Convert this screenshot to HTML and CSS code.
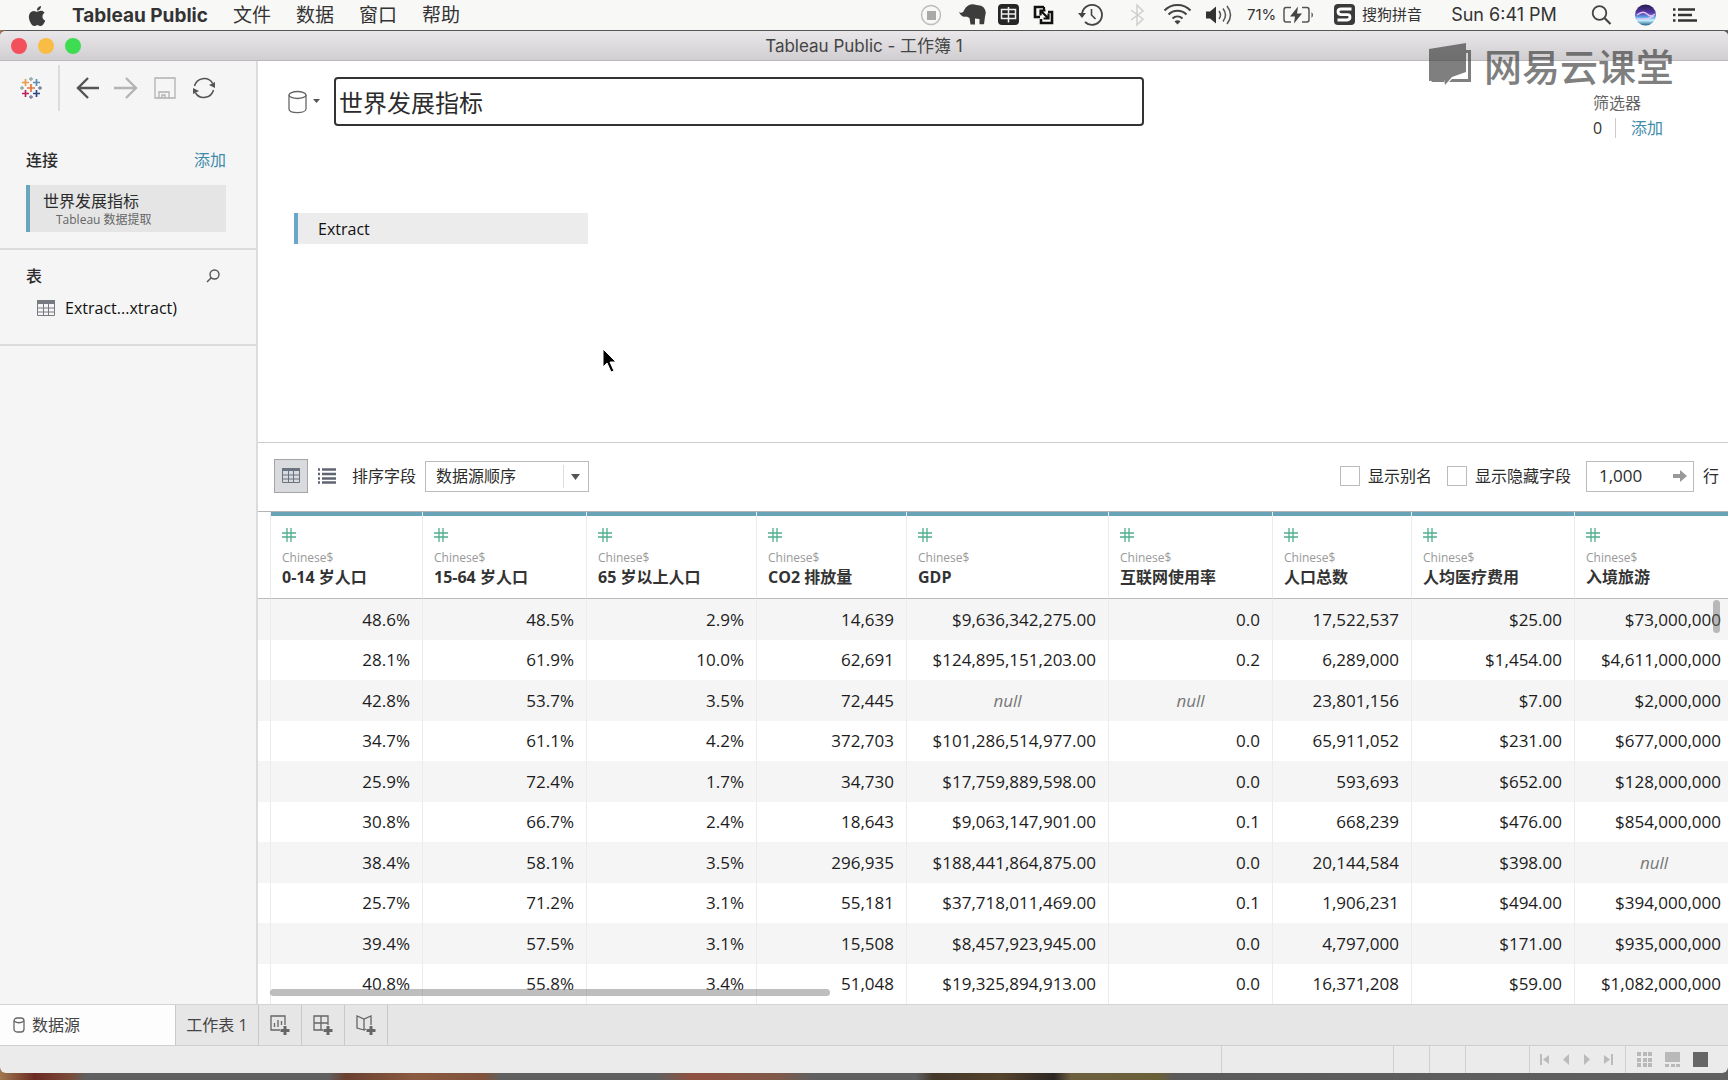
FILE: index.html
```html
<!DOCTYPE html>
<html lang="zh-CN">
<head>
<meta charset="utf-8">
<title>Tableau Public - 工作簿 1</title>
<link rel="stylesheet" href="styles.css">
</head>
<body>
<svg class="defs" width="0" height="0" aria-hidden="true">
  <defs>
    <symbol id="hash" viewBox="0 0 14 14"><path d="M5 0v14M9 0v14M0 5h14M0 9h14" stroke="#4fae8c" stroke-width="1.3" fill="none"/></symbol>
    <linearGradient id="siri" x1="0" y1="0" x2="0" y2="1"><stop offset="0" stop-color="#231a4d"/><stop offset=".4" stop-color="#5a3aa8"/><stop offset=".6" stop-color="#5aa5e8"/><stop offset=".75" stop-color="#c9f1ff"/><stop offset="1" stop-color="#1d5f86"/></linearGradient>
  </defs>
</svg>

<header class="menubar">
  <nav class="menus">
    <a href="#" class="apple" aria-label="Apple"><svg width="20" height="20" viewBox="0 0 24 24"><path fill="#3c3c3c" d="M12.152 6.896c-.948 0-2.415-1.078-3.96-1.04-2.04.027-3.91 1.183-4.961 3.014-2.117 3.675-.546 9.103 1.519 12.09 1.013 1.454 2.208 3.09 3.792 3.039 1.52-.065 2.09-.987 3.935-.987 1.831 0 2.35.987 3.96.948 1.637-.026 2.676-1.48 3.676-2.948 1.156-1.688 1.636-3.325 1.662-3.415-.039-.013-3.182-1.221-3.22-4.857-.026-3.04 2.48-4.494 2.597-4.559-1.429-2.09-3.623-2.324-4.39-2.376-2-.156-3.675 1.09-4.61 1.09zM15.53 3.83c.843-1.012 1.4-2.427 1.245-3.83-1.207.052-2.662.805-3.532 1.818-.78.896-1.454 2.338-1.273 3.714 1.338.104 2.715-.688 3.559-1.701"/></svg></a>
    <a href="#" class="app-name">Tableau Public</a>
    <a href="#">文件</a>
    <a href="#">数据</a>
    <a href="#">窗口</a>
    <a href="#">帮助</a>
  </nav>
  <div class="tray">
    <svg width="32" height="30"><circle cx="15" cy="15" r="9.500" fill="none" stroke="#bdbdbd" stroke-width="1.500"/><rect x="11" y="11" width="9" height="9" fill="#a9a9a9"/></svg>
    <svg width="44" height="30"><path fill="#3d3d3d" d="M11 11.500c1 1.800 3 1.700 4.500 0C17 8.500 19 5 23 4.500c3-.8 5 .8 7 .8 4.500 0 7.500 3 7.800 7.500l-.8 4-1 7.500h-4.500V19l-4.500-.5V24.500h-4.500l-1-6.500-3-1.500c-3.500 1-6.500-1-7.500-5z"/></svg>
    <svg width="34" height="30"><rect x="6" y="4" width="21" height="21" rx="4" fill="#262626"/><path d="M9.500 9.500h14v9h-14zM16.500 7v15.500M9.500 14h14" fill="none" stroke="#eee" stroke-width="1.500"/></svg>
    <svg width="36" height="30"><path d="M18 7H9v10h5M22 12h4v11H15v-4" fill="none" stroke="#111" stroke-width="2.600"/><path d="M15 11l7 7M14.500 15.500v-5h5M22.500 13.500v5h-5M18 7v4" fill="none" stroke="#111" stroke-width="2.200"/></svg>
    <svg width="54" height="30"><path d="M20 15a10 10 0 1 1 3 7" fill="none" stroke="#444" stroke-width="1.800"/><path d="M16 13h8l-4 5z" fill="#444"/><path d="M29.500 9v6l4 4" fill="none" stroke="#444" stroke-width="1.600"/></svg>
    <svg width="38" height="30"><path d="M15 10l12 9-6 6V5l6 6-12 9" fill="none" stroke="#cfcfcf" stroke-width="1.500"/></svg>
    <svg width="44" height="30"><path d="M10.500 10.500c7-7.500 19-7.500 26 0M14.500 14.500c5-5 13-5 18 0M18.500 18.500c3-2.800 7-2.800 10 0" fill="none" stroke="#444" stroke-width="2"/><path d="M20.500 21.500a4 4 0 0 1 6 0l-3 3z" fill="#444"/></svg>
    <svg width="42" height="30"><path d="M8 11.500h4l6-5v17l-6-5H8z" fill="#333"/><path d="M21 11q3 4 0 8M25 8.500q5 6.500 0 13M29 6q7 9 0 18" fill="none" stroke="#555" stroke-width="1.500"/></svg>
    <span class="battery-text">71%</span>
    <svg width="44" height="30"><path d="M9 7.500H4Q2 7.500 2 10v9.500Q2 22 4 22h5M20 7.500h5q2 0 2 2.500v9.500q0 2.500-2 2.500h-5" fill="none" stroke="#555" stroke-width="1.500"/><path d="M16 6.500L8 16.500h5l-1 7 8-10h-5z" fill="#444"/><path d="M29.500 12q3 3 0 6z" fill="#555"/></svg>
    <svg width="36" height="30"><rect x="8" y="4" width="21" height="21" rx="4" fill="#3a3a3a"/><path d="M25.500 9H15.500q-3.500 0-3.500 2.800t3.500 2.800h6q2.500 0 2.500 2.500T21.500 20H11.500" fill="none" stroke="#fff" stroke-width="2.800"/></svg>
    <span class="ime">搜狗拼音</span>
    <time class="clock">Sun 6:41 PM</time>
    <svg width="36" height="30"><circle cx="13.500" cy="13" r="6.800" fill="none" stroke="#444" stroke-width="1.800"/><path d="M18.500 18l6 6" stroke="#444" stroke-width="2.200"/></svg>
    <svg width="44" height="30"><circle cx="23.500" cy="15" r="10.500" fill="url(#siri)"/><path d="M15 15q6-5 10-1t8 0M15 18q7 3 17-2" fill="none" stroke="#e9c2f5" stroke-width="1.300"/></svg>
    <svg width="62" height="30"><path d="M12 9.500h17M12 15h14M12 20.500h19M7 9.500h2.500M7 15h2.500M7 20.500h2.500" stroke="#333" stroke-width="2.500"/></svg>
  </div>
</header>

<div class="window">
  <div class="titlebar">
    <div class="lights"><button class="light red" aria-label="关闭"></button><button class="light yellow" aria-label="最小化"></button><button class="light green" aria-label="缩放"></button></div>
    <h1>Tableau Public - 工作簿 1</h1>
  </div>

  <div class="workspace">
    <aside class="sidebar">
      <div class="tools">
        <button class="logo" aria-label="起始页"><svg width="24" height="24" viewBox="0 0 24 24" fill="none" stroke-width="1.700"><path d="M12 8v8M8 12h8" stroke="#e8763a"/><path d="M6.500 3v7M3 6.500h7" stroke="#eb9b45"/><path d="M17.500 3v7M14 6.500h7" stroke="#5b8db8"/><path d="M6.500 14v7M3 17.500h7" stroke="#b8235f"/><path d="M17.500 14v7M14 17.500h7" stroke="#2d4a86"/><path d="M12 1v4M10 3h4M1 12h4M3 10v4" stroke="#8fa9a5" stroke-width="1.300"/><path d="M19 12h4M21 10v4M12 19v4M10 21h4" stroke="#7a809a" stroke-width="1.300"/></svg></button>
        <button aria-label="后退"><svg width="24" height="24" fill="none" stroke="#555" stroke-width="2.400"><path d="M13 2L3 12l10 10M2 12h22"/></svg></button>
        <button aria-label="前进"><svg width="24" height="24" fill="none" stroke="#b4b4b4" stroke-width="2.400"><path d="M12 2l10 10-10 10M22 12H0"/></svg></button>
        <button aria-label="保存"><svg width="24" height="24" fill="none" stroke="#b0b0b0" stroke-width="1.300"><path d="M2 2h20v20H2zM6 22v-6h10v6M9 22v-3h3v3"/></svg></button>
        <button aria-label="刷新"><svg width="24" height="24" fill="none" stroke="#555" stroke-width="1.500"><path d="M2.500 10a10 10 0 0 1 18-3M21.500 14a10 10 0 0 1-18 3"/><path d="M23 6v6l-6-3zM1 18v-6l6 3z" fill="#555" stroke="none"/></svg></button>
      </div>
      <section class="connections">
        <div class="section-head"><h2>连接</h2><a href="#">添加</a></div>
        <div class="connection"><span class="name">世界发展指标</span><span class="kind">Tableau 数据提取</span></div>
      </section>
      <section class="tables">
        <div class="section-head"><h2>表</h2><button aria-label="搜索"><svg width="14" height="14" fill="none" stroke="#555" stroke-width="1.400"><circle cx="8.500" cy="5.500" r="4.500"/><path d="M5.500 8.500L1 13"/></svg></button></div>
        <a href="#" class="table-item"><svg width="18" height="16"><path d="M0 0h18v4H0z" fill="#777b80"/><path d="M.5.5h17v15H.5zM6.500 4v12M11.500 4v12M0 8h18M0 12h18" fill="none" stroke="#777b80"/></svg>Extract...xtract)</a>
      </section>
    </aside>

    <main class="main">
      <section class="canvas">
        <button class="source-menu" aria-label="数据源"><svg width="32" height="24" fill="none" stroke="#666" stroke-width="1.300"><ellipse cx="9.500" cy="5" rx="8.500" ry="3.500"/><path d="M1 5v14c0 4.700 17 4.700 17 0V5"/><path d="M25 9h7l-3.500 4z" fill="#555" stroke="none"/></svg></button>
        <input class="source-name" type="text" aria-label="数据源名称" value="世界发展指标">
        <div class="filters"><span>筛选器</span><div class="filter-row"><span class="count">0</span><a href="#">添加</a></div></div>
        <button class="pill">Extract</button>
      </section>

      <div class="gridbar">
        <button class="view active" aria-label="网格"><svg width="18" height="16"><path d="M0 0h18v3H0z" fill="#6b7280"/><path d="M.5.5h17v14H.5zM6.500 2v13M11.500 2v13M0 7h18M0 11h18" fill="none" stroke="#6b7280"/></svg></button>
        <button class="view" aria-label="列表"><svg width="18" height="16"><path d="M4 1.500h14M4 6h14M4 10.500h14M4 14.500h14M0 1.500h2M0 6h2M0 10.500h2M0 14.500h2" stroke="#5f6672" stroke-width="2.500"/></svg></button>
        <label for="sort">排序字段</label>
        <div class="select"><select id="sort"><option>数据源顺序</option></select><svg width="25" height="29"><path d="M.5 3v23" stroke="#ddd"/><path d="M8 12h9l-4.500 6z" fill="#555"/></svg></div>
        <div class="options">
          <label><input type="checkbox">显示别名</label>
          <label><input type="checkbox">显示隐藏字段</label>
          <div class="rows-box"><input type="text" id="rows" value="1,000"><button aria-label="应用"><svg width="14" height="12"><path d="M0 4h7V0l7 6-7 6V8H0z" fill="#999"/></svg></button></div>
          <label for="rows">行</label>
        </div>
      </div>

      <div class="grid">
        <table>
          <colgroup><col class="c0"><col class="c1"><col class="c2"><col class="c3"><col class="c4"><col class="c5"><col class="c2"><col class="c6"><col class="c7"><col class="c8"></colgroup>
          <thead>
            <tr>
              <td></td>
              <th scope="col"><svg width="14" height="14"><use href="#hash"/></svg><small>Chinese$</small>0-14 岁人口</th>
              <th scope="col"><svg width="14" height="14"><use href="#hash"/></svg><small>Chinese$</small>15-64 岁人口</th>
              <th scope="col"><svg width="14" height="14"><use href="#hash"/></svg><small>Chinese$</small>65 岁以上人口</th>
              <th scope="col"><svg width="14" height="14"><use href="#hash"/></svg><small>Chinese$</small>CO2 排放量</th>
              <th scope="col"><svg width="14" height="14"><use href="#hash"/></svg><small>Chinese$</small>GDP</th>
              <th scope="col"><svg width="14" height="14"><use href="#hash"/></svg><small>Chinese$</small>互联网使用率</th>
              <th scope="col"><svg width="14" height="14"><use href="#hash"/></svg><small>Chinese$</small>人口总数</th>
              <th scope="col"><svg width="14" height="14"><use href="#hash"/></svg><small>Chinese$</small>人均医疗费用</th>
              <th scope="col"><svg width="14" height="14"><use href="#hash"/></svg><small>Chinese$</small>入境旅游</th>
            </tr>
          </thead>
          <tbody>
            <tr><td></td><td>48.6%</td><td>48.5%</td><td>2.9%</td><td>14,639</td><td>$9,636,342,275.00</td><td>0.0</td><td>17,522,537</td><td>$25.00</td><td>$73,000,000</td></tr>
            <tr><td></td><td>28.1%</td><td>61.9%</td><td>10.0%</td><td>62,691</td><td>$124,895,151,203.00</td><td>0.2</td><td>6,289,000</td><td>$1,454.00</td><td>$4,611,000,000</td></tr>
            <tr><td></td><td>42.8%</td><td>53.7%</td><td>3.5%</td><td>72,445</td><td class="null">null</td><td class="null">null</td><td>23,801,156</td><td>$7.00</td><td>$2,000,000</td></tr>
            <tr><td></td><td>34.7%</td><td>61.1%</td><td>4.2%</td><td>372,703</td><td>$101,286,514,977.00</td><td>0.0</td><td>65,911,052</td><td>$231.00</td><td>$677,000,000</td></tr>
            <tr><td></td><td>25.9%</td><td>72.4%</td><td>1.7%</td><td>34,730</td><td>$17,759,889,598.00</td><td>0.0</td><td>593,693</td><td>$652.00</td><td>$128,000,000</td></tr>
            <tr><td></td><td>30.8%</td><td>66.7%</td><td>2.4%</td><td>18,643</td><td>$9,063,147,901.00</td><td>0.1</td><td>668,239</td><td>$476.00</td><td>$854,000,000</td></tr>
            <tr><td></td><td>38.4%</td><td>58.1%</td><td>3.5%</td><td>296,935</td><td>$188,441,864,875.00</td><td>0.0</td><td>20,144,584</td><td>$398.00</td><td class="null">null</td></tr>
            <tr><td></td><td>25.7%</td><td>71.2%</td><td>3.1%</td><td>55,181</td><td>$37,718,011,469.00</td><td>0.1</td><td>1,906,231</td><td>$494.00</td><td>$394,000,000</td></tr>
            <tr><td></td><td>39.4%</td><td>57.5%</td><td>3.1%</td><td>15,508</td><td>$8,457,923,945.00</td><td>0.0</td><td>4,797,000</td><td>$171.00</td><td>$935,000,000</td></tr>
            <tr><td></td><td>40.8%</td><td>55.8%</td><td>3.4%</td><td>51,048</td><td>$19,325,894,913.00</td><td>0.0</td><td>16,371,208</td><td>$59.00</td><td>$1,082,000,000</td></tr>
          </tbody>
        </table>
        <div class="thumb vertical"></div>
        <div class="thumb horizontal"></div>
      </div>
    </main>
  </div>

  <nav class="tabs">
    <button class="tab source"><svg width="12" height="16" fill="none" stroke="#666" stroke-width="1.300"><rect x="1" y="1" width="10" height="14" rx="3"/><path d="M1 4q5 3.500 10 0"/></svg>数据源</button>
    <button class="tab sheet">工作表 1</button>
    <button class="tab new" aria-label="新建工作表"><svg width="22" height="22" fill="none" stroke="#666" stroke-width="1.300"><path d="M11 16H2V2h14v9M5.500 13V9M9 13V6M12.500 11V7"/><path d="M16 12v9M11.500 16.500h9" stroke-width="3"/></svg></button>
    <button class="tab new" aria-label="新建仪表板"><svg width="22" height="22" fill="none" stroke="#666" stroke-width="1.300"><path d="M11 16H2V2h14v9M9 2v14M2 9h14"/><path d="M16 12v9M11.500 16.500h9" stroke-width="3"/></svg></button>
    <button class="tab new" aria-label="新建故事"><svg width="22" height="22" fill="none" stroke="#666" stroke-width="1.300"><path d="M9 5v11l-7-2V2l7 3 7-3v9"/><path d="M9 16l2-1"/><path d="M16 12v9M11.500 16.500h9" stroke-width="3"/></svg></button>
  </nav>

  <footer class="status">
    <span class="cell wide"></span><span class="cell"></span><span class="cell"></span><span class="cell mid"></span>
    <div class="cell pager">
      <button aria-label="首个"><svg width="10" height="11" fill="#bbb"><path d="M0 0h2v11H0zM9 1v9L3 5.500z"/></svg></button>
      <button aria-label="上一个"><svg width="10" height="11" fill="#bbb"><path d="M8 0v11L2 5.500z"/></svg></button>
      <button aria-label="下一个"><svg width="10" height="11" fill="#bbb"><path d="M2 0v11l6-5.500z"/></svg></button>
      <button aria-label="末个"><svg width="10" height="11" fill="#bbb"><path d="M8 0h2v11H8zM1 1v9l6-4.500z"/></svg></button>
    </div>
    <div class="cell views">
      <button aria-label="缩略图"><svg width="15" height="15" fill="#b9b9b9"><path d="M0 0h4v4H0zM6 0h4v4H6zM11 0h4v4h-4zM0 6h4v4H0zM6 6h4v4H6zM11 6h4v4h-4zM0 11h4v4H0zM6 11h4v4H6zM11 11h4v4h-4z"/></svg></button>
      <button aria-label="胶片"><svg width="15" height="15" fill="#b9b9b9"><path d="M0 0h15v10H0zM0 12h4v3H0zM6 12h4v3H6zM11 12h4v3h-4z"/></svg></button>
      <button aria-label="单个"><svg width="15" height="15" fill="#666"><path d="M0 0h15v15H0z"/></svg></button>
    </div>
  </footer>
</div>

<div class="watermark"><svg width="42" height="44"><path d="M0 6l37-6v29l-14 5-7 8-1-6-15 2z"/><path d="M37 7h5v32H20l3-3h16V10h-2zM0 34l8 2 7 0v3H3z"/></svg>网易云课堂</div>
<svg class="pointer" width="16" height="26"><path d="M2 1v18l4-4 4 9 3-1-4-9h6z" fill="#000" stroke="#fff"/></svg>
</body>
</html>
```
FILE: styles.css
```css
* { box-sizing: border-box; }

body {
  margin: 0;
  height: 100vh;
  display: flex;
  flex-direction: column;
  overflow: hidden;
  position: relative;
  padding-bottom: 7px;
  background: linear-gradient(90deg, #a07850 0, #6b2a22 2%, #7a4a38 4%, #606060 5%, #606060 19%, #6b4030 20%, #8a5a40 24%, #80523c 28%, #606060 29%, #606060 38%, #8f5040 40%, #80594a 45%, #606060 47%, #606060 53%, #44382a 54%, #54422c 58%, #2c2624 61%, #6d6040 62%, #6a6038 67%, #5a5a5a 68%, #606060 100%);
  color: #2b2b2b;
  font: 16px/20px "Open Sans", "Noto Sans", "Noto Sans CJK SC", sans-serif;
}

button, input, select { font: inherit; color: inherit; }
button { border: 0; padding: 0; background: none; }
a { color: inherit; text-decoration: none; }
svg { display: block; flex: none; }
.defs { position: absolute; }
h1, h2 { margin: 0; font-size: 16px; font-weight: 500; }

/* Menu bar */
.menubar {
  flex: none;
  height: 30px;
  display: flex;
  justify-content: space-between;
  background: #f8f8f7;
  font-family: Inter, "Noto Sans CJK SC", sans-serif;
  color: #333;
}
.menus, .tray { display: flex; align-items: center; }
.menus { gap: 25px; padding: 1px 0 0 27px; font-size: 19px; }
.app-name { font-weight: 700; }
.battery-text { width: 42px; padding-left: 7px; font-size: 15px; }
.ime { width: 60px; font-size: 15px; }
.clock { width: 164px; text-align: center; font-size: 18px; }

/* Window */
.window {
  flex: 1;
  min-height: 0;
  display: flex;
  flex-direction: column;
  overflow: hidden;
  border-top: 1px solid #555;
  border-radius: 6px;
  background: #ebebeb;
}
.titlebar {
  flex: none;
  height: 30px;
  display: grid;
  grid-template-columns: 1fr auto 1fr;
  align-items: center;
  padding: 1px 11px 0;
  background: linear-gradient(#e9e7ea, #d0ced1);
  border-bottom: 1px solid #bdb8bd;
}
.titlebar h1 { font: 400 17px/20px Inter, "Noto Sans CJK SC", sans-serif; color: #444; }
.lights { display: flex; gap: 11px; }
.light { width: 16px; height: 16px; border-radius: 50%; }
.red { background: #f3505c; }
.yellow { background: #f8bd45; }
.green { background: #3edc50; }

.workspace {
  flex: 1;
  min-height: 0;
  display: grid;
  grid-template-columns: 258px minmax(0, 1fr);
}

/* Sidebar */
.sidebar { background: #f5f5f5; border-right: 2px solid #dcdcdc; }
.tools { display: flex; align-items: center; gap: 15px; height: 53px; margin-left: 19px; }
.tools .logo { padding-right: 15px; height: 46px; border-right: 2px solid #dcdcdc; }
.section-head { display: flex; justify-content: space-between; align-items: center; }
.section-head a, .filters a { color: #3f8cab; }
.connections { padding: 36px 30px 16px 26px; border-bottom: 2px solid #dcdcdc; }
.connection {
  display: flex;
  flex-direction: column;
  height: 47px;
  margin-top: 15px;
  padding: 6px 0 0 13px;
  border-left: 4px solid #68a7bb;
  background: #e5e5e5;
}
.connection .kind { padding-left: 13px; font-size: 12px; line-height: 18px; color: #666; }
.tables { height: 96px; padding: 16px 36px 0 26px; border-bottom: 2px solid #dcdcdc; }
.table-item { display: flex; align-items: center; gap: 10px; margin: 12px 0 0 11px; color: #111; }

/* Canvas */
.main { display: flex; flex-direction: column; min-width: 0; background: #fff; }
.canvas {
  flex: none;
  height: 382px;
  display: grid;
  grid-template-columns: 32px minmax(0, 810px) 1fr;
  grid-template-rows: 49px 31px;
  row-gap: 87px;
  column-gap: 14px;
  align-content: start;
  padding: 16px 65px 0 30px;
  border-bottom: 1px solid #ccc;
}
.source-menu { align-self: center; }
.source-name {
  width: 100%;
  padding: 0 3px 1px;
  border: 2px solid #333;
  border-radius: 4px;
  outline: 0;
  font-size: 24px;
}
.filters { justify-self: end; padding-top: 16px; width: 70px; color: #666; }
.filter-row { display: flex; margin-top: 5px; }
.filter-row .count { width: 24px; border-right: 1px solid #ccc; color: #333; }
.filter-row a { margin-left: 15px; white-space: nowrap; }
.pill {
  grid-column: 1 / 3;
  width: 294px;
  height: 31px;
  margin-left: 6px;
  padding-left: 20px;
  border-left: 4px solid #68a7c8;
  background: #ececec;
  text-align: left;
  color: #111;
}

/* Grid toolbar */
.gridbar {
  flex: none;
  height: 69px;
  display: flex;
  align-items: center;
  padding: 0 9px 2px 16px;
  border-bottom: 1px solid #b5b5b5;
}
.view { width: 34px; height: 34px; display: grid; place-items: center; margin-right: 2px; }
.view.active { background: #d9dade; border: 1px solid #a5a5a5; }
.gridbar label { white-space: nowrap; }
.view + label { margin-left: 6px; }
.select {
  display: grid;
  align-items: center;
  width: 164px;
  height: 31px;
  margin-left: 9px;
  border: 1px solid #bbb;
}
.select select, .select svg { grid-area: 1 / 1; }
.select select { appearance: none; height: 29px; width: 100%; padding: 0 0 0 10px; border: 0; background: none; }
.select svg { justify-self: end; pointer-events: none; }
.options { display: flex; align-items: center; margin-left: auto; }
.options label { display: flex; align-items: center; gap: 8px; margin-right: 15px; }
.options input[type="checkbox"] { appearance: none; width: 20px; height: 20px; margin: 0; border: 1px solid #bbb; background: #fff; }
.rows-box { display: flex; align-items: center; width: 108px; height: 31px; padding: 0 6px 0 12px; border: 1px solid #bbb; }
.rows-box input { flex: 1; min-width: 0; border: 0; padding: 0; outline: 0; background: none; font-size: 17px; }
.options label:last-child { margin: 0 0 0 9px; }

/* Data grid */
.grid { position: relative; flex: 1; min-height: 0; overflow: hidden; }
table { width: 1476px; table-layout: fixed; border-collapse: separate; border-spacing: 0; }
.c0 { width: 13px; }
.c1 { width: 152px; }
.c2 { width: 164px; }
.c3 { width: 170px; }
.c4 { width: 150px; }
.c5 { width: 202px; }
.c6 { width: 139px; }
.c7 { width: 163px; }
.c8 { width: 159px; }
th, td { border-right: 1px solid #ececec; white-space: nowrap; }
thead td, thead th { height: 87px; border-bottom: 1px solid #bbb; }
th {
  padding: 5px 0 0 11px;
  vertical-align: middle;
  text-align: left;
  font-weight: 700;
  color: #333;
  background: linear-gradient(#68a3b8, #68a3b8) 0 0 / 100% 4px no-repeat;
}
th small { display: block; margin-top: 7px; font-size: 12px; line-height: 18px; font-weight: 400; color: #999; }
tbody td { height: 41px; padding: 0 12px 0 0; text-align: right; font-size: 17px; color: #1c1c1c; }
tbody tr:nth-child(even) td { height: 40px; }
tbody tr:nth-child(odd) { background: #f5f5f5; }
tbody td:first-child { padding: 0; }
tbody .null { padding: 0; text-align: center; font-style: italic; color: #777; }
.thumb { position: absolute; border-radius: 4px; background: rgba(110, 110, 110, .45); }
.vertical { right: 8px; top: 88px; width: 7px; height: 33px; }
.horizontal { left: 12px; bottom: 8px; width: 560px; height: 7px; }

/* Sheet tabs */
.tabs { flex: none; display: flex; height: 42px; background: #e6e6e6; border-top: 1px solid #d4d4d4; border-bottom: 1px solid #cfcfcf; }
.tab { display: flex; align-items: center; border-right: 1px solid #c9c9c9; color: #444; }
.tab.source { gap: 7px; width: 176px; padding-left: 13px; background: #fdfdfd; }
.tab.sheet { justify-content: center; width: 83px; }
.tab.new { justify-content: center; width: 43px; }

/* Status bar */
.status { flex: none; display: flex; justify-content: flex-end; height: 27px; }
.cell { width: 36px; border-left: 1px solid #cfcfcf; }
.cell.wide { width: 172px; }
.cell.mid { width: 64px; }
.pager { display: flex; align-items: center; gap: 11px; width: 96px; padding-left: 10px; }
.views { display: flex; align-items: center; gap: 13px; width: 103px; padding-left: 11px; }

/* Overlays */
.watermark {
  position: absolute;
  top: 43px;
  right: 54px;
  display: flex;
  align-items: center;
  gap: 13px;
  font: 500 38px/44px "Noto Sans CJK SC", sans-serif;
  color: #3c3c3c;
  fill: #3c3c3c;
  opacity: .65;
  pointer-events: none;
}
.pointer { position: absolute; left: 601px; top: 348px; pointer-events: none; }
```
